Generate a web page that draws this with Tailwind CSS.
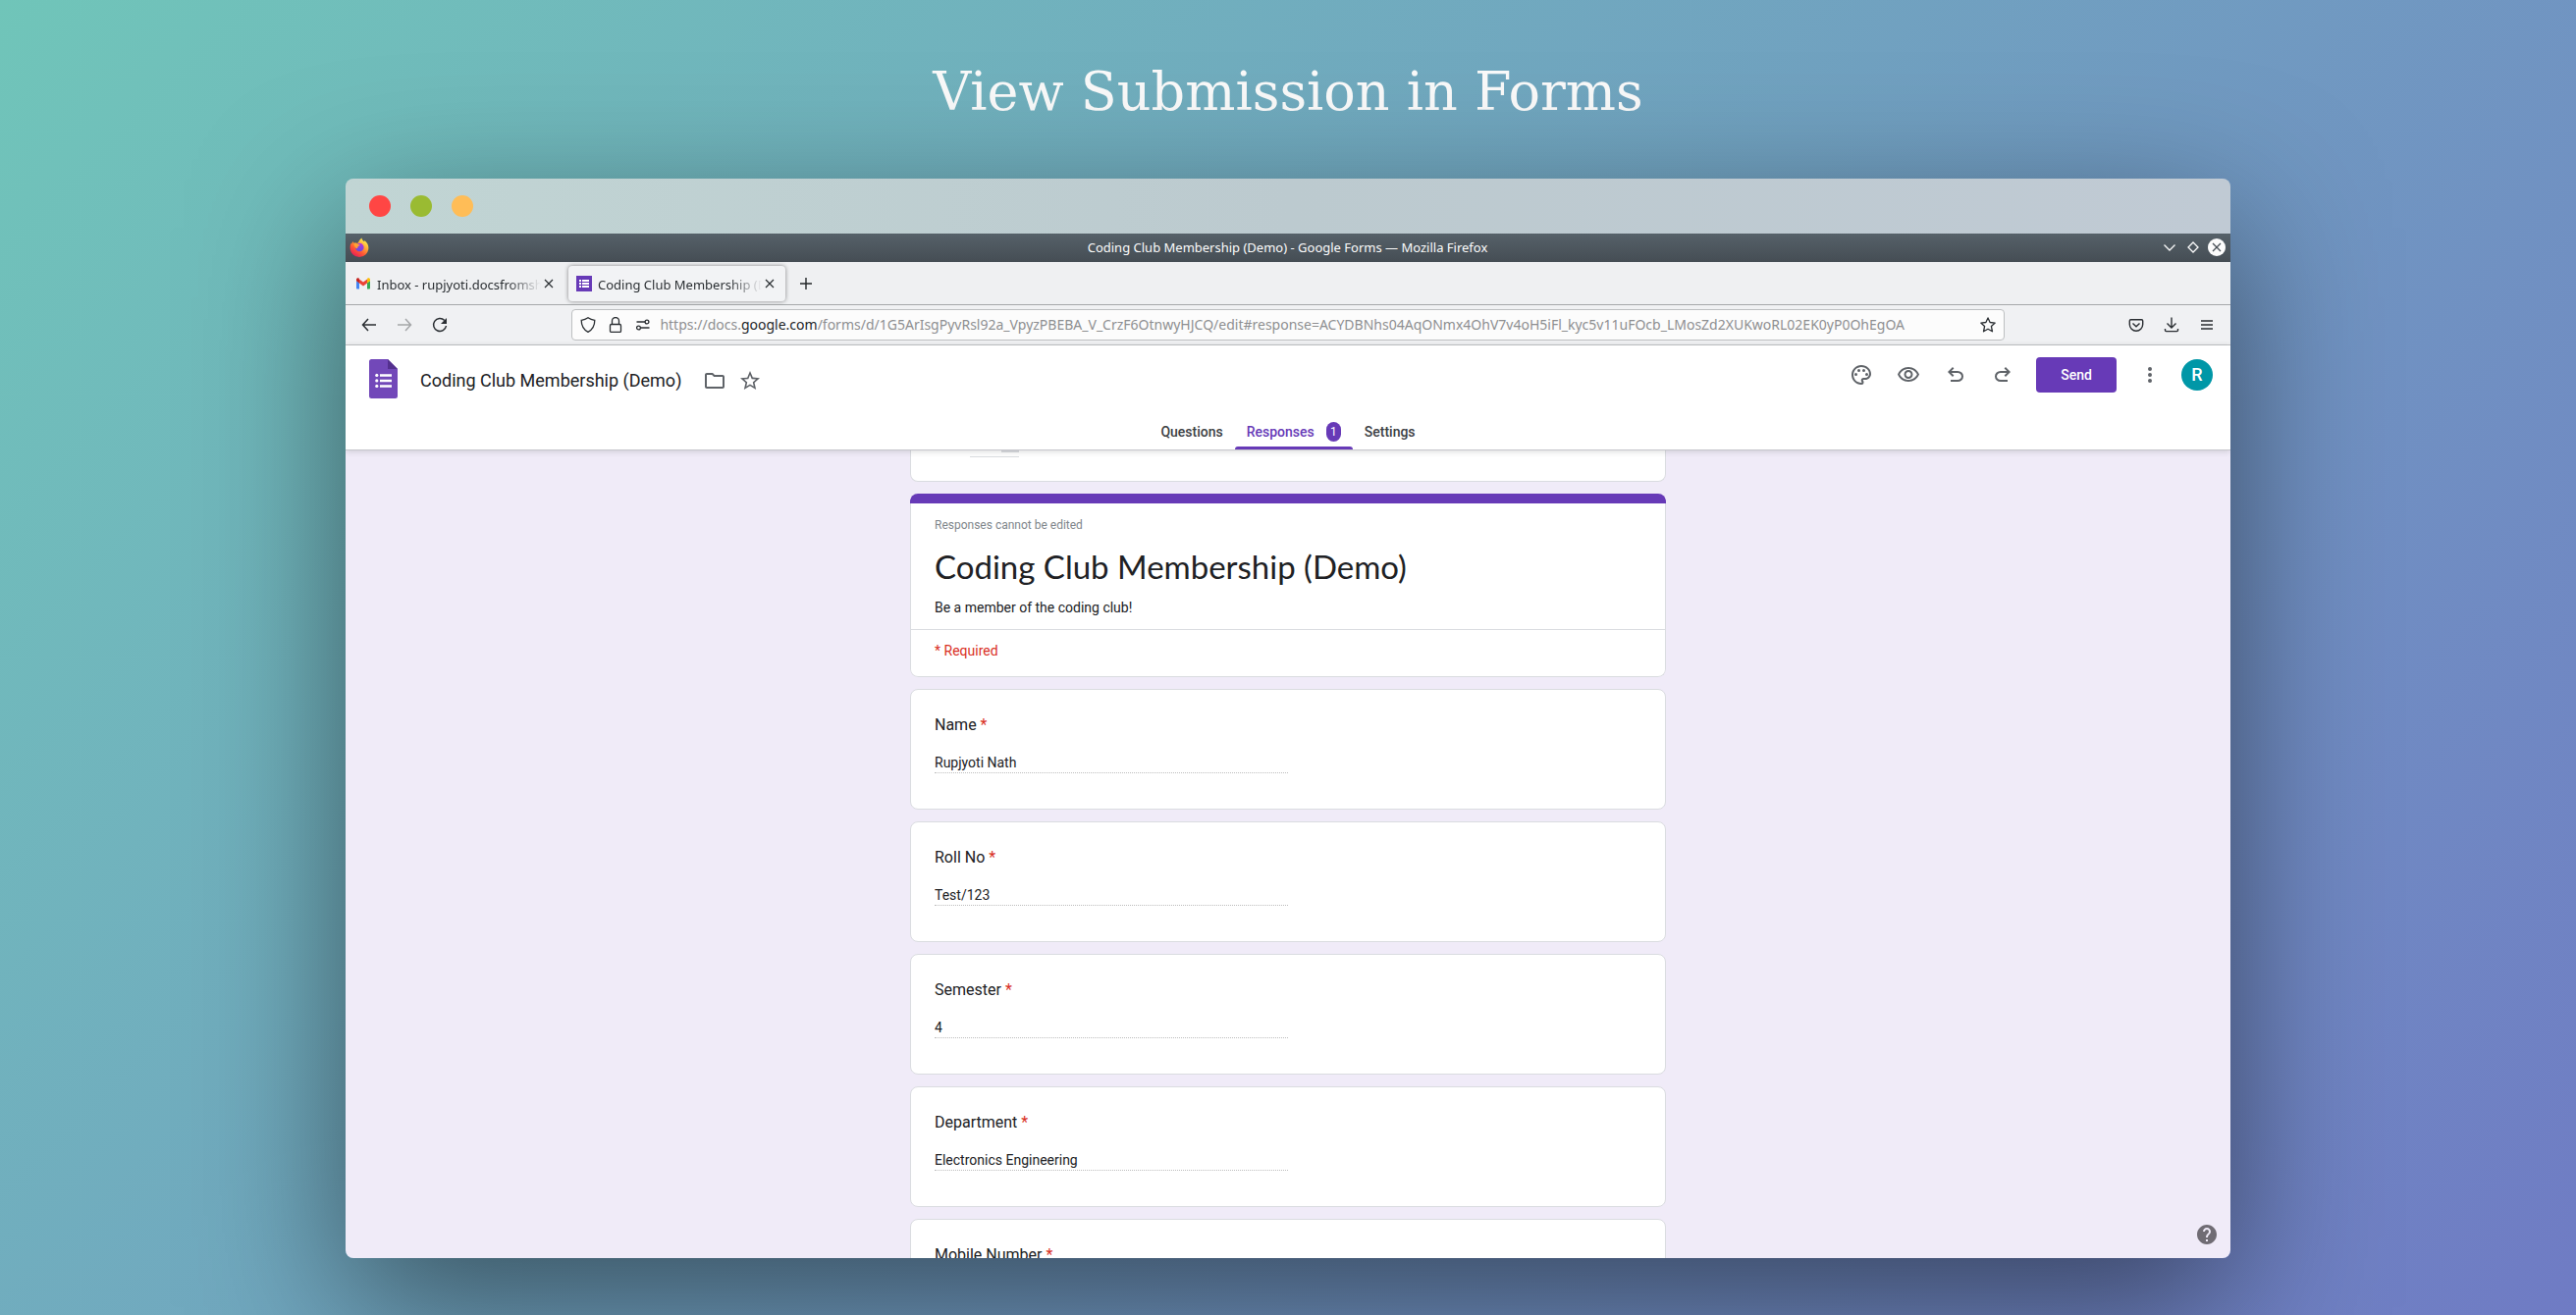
<!DOCTYPE html>
<html lang="en">
<head>
  <meta charset="utf-8">
  <meta name="viewport" content="width=device-width, initial-scale=1">
  <title>View Submission in Forms</title>
  <script src="https://cdn.jsdelivr.net/npm/@tailwindcss/browser@4"></script>
</head>
<body class="flex h-screen flex-col overflow-hidden bg-linear-135 from-[#70c5b9] to-[#6f7bc4] px-88 pb-[58px] font-['Noto_Sans',sans-serif]">

  <h1 class="pt-[58px] pb-[52px] text-center font-['DejaVu_Serif',serif] text-[54px] leading-[72px] text-[#fafafa]">View Submission in Forms</h1>

  <!-- Window frame -->
  <div class="relative flex min-h-0 flex-1 flex-col overflow-hidden rounded-lg shadow-[0_50px_150px_rgba(0,0,0,0.5)]">

    <div class="flex h-14 shrink-0 items-center gap-5 bg-linear-to-r from-[#c1d5d4] via-[#bccacf] to-[#c0cad4] pl-6">
      <span class="size-[22px] rounded-full bg-[#ff4644]"></span>
      <span class="size-[22px] rounded-full bg-[#9abb32]"></span>
      <span class="size-[22px] rounded-full bg-[#ffbd57]"></span>
    </div>

    <!-- Firefox title bar -->
    <div class="flex h-[29px] shrink-0 items-center bg-linear-to-b from-[#566169] to-[#454d54] pr-[5px] pb-px pl-1 text-[#fcfcfc]">
      <div class="flex flex-1 items-center">
        <svg class="size-5" viewBox="0 0 20 20">
          <defs>
            <linearGradient id="fx" x1="0.85" y1="0.1" x2="0.25" y2="1">
              <stop offset="0" stop-color="#fff44f"/>
              <stop offset="0.35" stop-color="#ffa436"/>
              <stop offset="0.65" stop-color="#ff5634"/>
              <stop offset="1" stop-color="#e6195c"/>
            </linearGradient>
            <linearGradient id="fx-globe" x1="0.7" y1="0" x2="0.3" y2="1">
              <stop offset="0" stop-color="#b833e1"/>
              <stop offset="1" stop-color="#5b4fe0"/>
            </linearGradient>
          </defs>
          <path fill="url(#fx)" d="M12.4.5c.4 1.900 1.500 2.700 2.700 3.700.2-.3.200-.7.100-1.100 2.500 1.700 4.200 4.300 4.200 7.400a9.400 9.400 0 0 1-18.800 0c0-2.300.500-3.800 1.300-5 0 .5.100.8.300 1.100.1-1 .7-1.900 1.300-2.600.2.900.6 1.400 1.200 1.800 1.200-.3 2.300-.1 3.200.4C9.600 4.200 10.500 1.800 12.400.5z"/>
          <circle cx="10.300" cy="10" r="4.300" fill="url(#fx-globe)"/>
          <path fill="#ffa233" d="M4.700 5.800c1.500-.7 3.200-.2 4.200 1.100.5.200 1.700.2 1.900.7-.3 1.100-1.700 1.100-2.200 1.700-.5.700.1 1.500-.8 2-1.600-.3-3.500-2.700-3.100-5.500z"/>
        </svg>
      </div>
      <div class="text-[13px] leading-5">Coding Club Membership (Demo) - Google Forms — Mozilla Firefox</div>
      <div class="flex flex-1 items-center justify-end gap-1.5">
        <button aria-label="Minimize">
          <svg class="size-[18px]" viewBox="0 0 18 18" fill="none" stroke="currentColor" stroke-width="1.300"><path d="m3.500 6.500 5.500 5.500 5.500-5.500"/></svg>
        </button>
        <button aria-label="Maximize">
          <svg class="size-[18px]" viewBox="0 0 18 18" fill="none" stroke="currentColor" stroke-width="1.300"><path d="m9 4 5 5-5 5-5-5z"/></svg>
        </button>
        <button aria-label="Close window">
          <svg class="size-[18px]" viewBox="0 0 18 18"><circle cx="9" cy="9" r="9" fill="#fcfcfc"/><path d="m5 5 8 8m0-8-8 8" stroke="#474f56" stroke-width="1.300"/></svg>
        </button>
      </div>
    </div>

    <!-- Tabs -->
    <div class="flex h-11 shrink-0 items-center gap-1 border-b border-[#a5a8aa] bg-[#eff0f2] px-0.5 text-[13px] text-[#2a2e32]">
      <div class="flex h-9 w-[221px] items-center gap-1.5 pr-2 pl-2">
        <svg class="size-4 shrink-0" viewBox="0 0 16 16">
          <path fill="#4285f4" d="M1 5v7.500c0 .6.4 1 1 1h2V7.300z"/>
          <path fill="#34a853" d="M15 5v7.500c0 .6-.4 1-1 1h-2V7.300z"/>
          <path fill="#fbbc04" d="M12 3.500v4l3-2.300V4c0-1.500-1.500-2.200-2.600-1.400z"/>
          <path fill="#ea4335" d="M4 7.500v-4l4 3 4-3v4l-4 3z"/>
          <path fill="#c5221f" d="M1 4v1.200l3 2.300v-4l-.4-.9C2.500 1.800 1 2.500 1 4z"/>
        </svg>
        <span class="-mr-1.5 flex-1 overflow-hidden pt-0.5 leading-5 whitespace-nowrap mask-r-from-80% mask-r-to-100%">Inbox - rupjyoti.docsfromsh</span>
        <button aria-label="Close tab">
          <svg class="size-4" viewBox="0 0 16 16" stroke="currentColor" stroke-width="1.200"><path d="m4 4 8 8m0-8-8 8"/></svg>
        </button>
      </div>
      <div class="flex h-9 w-[221px] items-center gap-1.5 rounded bg-[#f2f3f5] pr-2 pl-2 shadow-[0_0_4px_rgba(0,0,0,0.45)]">
        <svg class="size-4 shrink-0" viewBox="0 0 16 16">
          <rect width="16" height="16" fill="#673ab7"/>
          <path fill="#fff" d="M3 4h2v2H3zm3 0h7v2H6zM3 7h2v2H3zm3 0h7v2H6zm-3 3h2v2H3zm3 0h7v2H6z"/>
        </svg>
        <span class="-mr-1.5 flex-1 overflow-hidden pt-0.5 leading-5 whitespace-nowrap mask-r-from-80% mask-r-to-100%">Coding Club Membership (Demo)</span>
        <button aria-label="Close tab">
          <svg class="size-4" viewBox="0 0 16 16" stroke="currentColor" stroke-width="1.200"><path d="m4 4 8 8m0-8-8 8"/></svg>
        </button>
      </div>
      <button aria-label="New tab" class="ml-2">
        <svg class="size-[18px]" viewBox="0 0 18 18" stroke="#232629" stroke-width="1.400"><path d="M9 3v12M3 9h12"/></svg>
      </button>
    </div>

    <!-- Navigation bar -->
    <div class="flex h-[41px] shrink-0 items-center border-b border-[#c3c4c6] bg-[#f0f1f3] text-[#2a2e32]">
      <div class="flex flex-1 items-center gap-5 pl-4">
        <button aria-label="Back">
          <svg class="size-4" viewBox="0 0 16 16" fill="none" stroke="currentColor" stroke-width="1.500"><path d="M15 8H1.500M7 2 1.500 8 7 14"/></svg>
        </button>
        <button aria-label="Forward" class="text-[#a4a6a8]" disabled>
          <svg class="size-4" viewBox="0 0 16 16" fill="none" stroke="currentColor" stroke-width="1.500"><path d="M1 8h13.500M9 2l5.500 6L9 14"/></svg>
        </button>
        <button aria-label="Reload">
          <svg class="size-4" viewBox="0 0 16 16"><path fill="none" stroke="currentColor" stroke-width="1.500" d="M14.500 9A6.500 6.500 0 1 1 12.800 3.500"/><path fill="currentColor" d="M15 1v6H9z"/></svg>
        </button>
      </div>

      <div class="flex h-8 w-[76%] items-center gap-3 rounded border border-[#bdbfc1] bg-[#fcfcfc] px-2">
        <svg class="size-4 shrink-0" viewBox="0 0 16 16" fill="none" stroke="currentColor" stroke-width="1.300"><path d="M8 .7C5.800 2.300 3.500 3 1.200 3.300c0 5.500 1.300 9.200 6.800 12 5.500-2.800 6.800-6.500 6.800-12C12.500 3 10.200 2.300 8 .7z"/></svg>
        <svg class="size-4 shrink-0" viewBox="0 0 16 16" fill="none" stroke="currentColor" stroke-width="1.300"><rect x="2.500" y="7.500" width="11" height="8" rx="1.200"/><path d="M4.500 7.500V4a3.500 3.500 0 0 1 7 0v3.500"/></svg>
        <svg class="size-4 shrink-0" viewBox="0 0 16 16" fill="none" stroke="currentColor" stroke-width="1.300"><path d="M1.500 5H10M6 11h8.500"/><circle cx="12" cy="5" r="1.900"/><circle cx="3.500" cy="11" r="1.900"/></svg>
        <div role="textbox" aria-label="Address" contenteditable="true" class="-ml-1 flex-1 overflow-hidden pl-px text-[14px] leading-6 whitespace-nowrap text-[#8e8f91]">https://docs.<span class="text-[#232629]">google.com</span>/forms/d/1G5ArIsgPyvRsl92a_VpyzPBEBA_V_CrzF6OtnwyHJCQ/edit#response=ACYDBNhs04AqONmx4OhV7v4oH5iFl_kyc5v11uFOcb_LMosZd2XUKwoRL02EK0yP0OhEgOA</div>
        <button aria-label="Bookmark">
          <svg class="size-4" viewBox="0 0 16 16" fill="none" stroke="currentColor" stroke-width="1.300" stroke-linejoin="round"><path d="m8 .9 2.100 4.600 5.100.6-3.800 3.400 1.100 5.300L8 12.200l-4.500 2.600 1.100-5.300L.8 6.100l5.100-.6z"/></svg>
        </button>
      </div>

      <div class="flex flex-1 items-center justify-end gap-5 pr-4">
        <button aria-label="Save to Pocket">
          <svg class="size-4" viewBox="0 0 16 16" fill="none" stroke="currentColor" stroke-width="1.400"><path d="M2.500 2.700h11c.7 0 1.200.5 1.200 1.200v3.600a6.700 6.700 0 0 1-13.400 0V3.900c0-.7.5-1.200 1.200-1.200z"/><path d="M4.500 6.500 8 9.800l3.500-3.300"/></svg>
        </button>
        <button aria-label="Downloads">
          <svg class="size-4" viewBox="0 0 16 16" fill="none" stroke="currentColor" stroke-width="1.400"><path d="M8 .5v10.500M3.500 6.500 8 11l4.500-4.500M1.500 12v1.500c0 .6.500 1.100 1.100 1.100h10.800c.6 0 1.100-.5 1.100-1.100V12"/></svg>
        </button>
        <button aria-label="Menu">
          <svg class="size-4" viewBox="0 0 16 16" stroke="currentColor" stroke-width="1.400"><path d="M2 4h12M2 8h12M2 12h12"/></svg>
        </button>
      </div>
    </div>

    <!-- Forms header -->
    <header class="relative z-10 flex h-[107px] shrink-0 flex-col justify-between border-b border-[#c6c6cb] bg-white font-[Roboto,sans-serif] text-[#5f6368] shadow-[0_1px_6px_rgba(60,64,67,0.2)]">
      <div class="flex pr-[18px] pl-6">
        <div class="flex flex-1 items-center pt-2">
          <svg class="h-10 w-[29px]" viewBox="0 0 29 40">
            <path fill="#7248b9" d="M2.500 0H19l10 10v27.500a2.500 2.500 0 0 1-2.500 2.500h-24A2.500 2.500 0 0 1 0 37.500v-35A2.500 2.500 0 0 1 2.500 0z"/>
            <path fill="#54308f" d="M19 0l10 10H19z"/>
            <path fill="#fff" d="M11 15.200h12v2.500H11zm0 5.500h12v2.500H11zm0 5.500h12v2.500H11z"/>
            <g fill="#fff"><circle cx="7.800" cy="16.400" r="1.600"/><circle cx="7.800" cy="21.900" r="1.600"/><circle cx="7.800" cy="27.400" r="1.600"/></g>
          </svg>
          <input type="text" aria-label="Form title" value="Coding Club Membership (Demo)" class="ml-[23px] h-8 w-72 pt-0.5 text-[18px] text-[#202124]">
          <button aria-label="Move to folder" class="pt-1">
            <svg class="size-6" viewBox="0 0 24 24" fill="currentColor"><path d="M9.200 6l2 2H20v10H4V6h5.200M10 4H4c-1.100 0-2 .9-2 2v12c0 1.100.9 2 2 2h16c1.100 0 2-.9 2-2V8c0-1.100-.9-2-2-2h-8z"/></svg>
          </button>
          <button aria-label="Star" class="ml-3 pt-1">
            <svg class="size-6" viewBox="0 0 24 24" fill="currentColor"><path d="M22 9.240l-7.190-.62L12 2 9.190 8.630 2 9.240l5.460 4.730L5.820 21 12 17.270 18.180 21l-1.630-7.030L22 9.240zM12 15.400l-3.760 2.270 1-4.280-3.320-2.880 4.380-.38L12 6.100l1.710 4.040 4.380.38-3.320 2.880 1 4.280L12 15.400z"/></svg>
          </button>
        </div>

        <div class="flex h-15 items-center">
          <div class="flex gap-6 pr-[22px]">
            <button aria-label="Customize theme">
              <svg class="size-6" viewBox="0 0 24 24" fill="currentColor"><path d="M12 22C6.490 22 2 17.510 2 12S6.490 2 12 2s10 4.040 10 9c0 3.310-2.690 6-6 6h-1.770c-.28 0-.5.22-.5.5 0 .12.050.23.130.33.41.47.64 1.060.64 1.670A2.500 2.500 0 0 1 12 22zm0-18c-4.410 0-8 3.590-8 8s3.590 8 8 8c.28 0 .5-.22.5-.5a.54.54 0 0 0-.14-.35c-.41-.46-.63-1.050-.63-1.650a2.500 2.500 0 0 1 2.500-2.500H16c2.210 0 4-1.790 4-4 0-3.860-3.590-7-8-7z"/><circle cx="6.500" cy="11.500" r="1.500"/><circle cx="9.500" cy="7.500" r="1.500"/><circle cx="14.500" cy="7.500" r="1.500"/><circle cx="17.500" cy="11.500" r="1.500"/></svg>
            </button>
            <button aria-label="Preview">
              <svg class="size-6" viewBox="0 0 24 24" fill="currentColor"><path d="M12 6c3.790 0 7.170 2.130 8.820 5.500C19.170 14.870 15.790 17 12 17s-7.170-2.130-8.820-5.500C4.830 8.130 8.210 6 12 6m0-2C7 4 2.730 7.110 1 11.500 2.730 15.890 7 19 12 19s9.270-3.110 11-7.500C21.270 7.110 17 4 12 4zm0 5c1.380 0 2.500 1.120 2.500 2.500S13.380 14 12 14s-2.500-1.120-2.500-2.500S10.620 9 12 9m0-2c-2.480 0-4.500 2.020-4.500 4.500S9.520 16 12 16s4.500-2.020 4.500-4.500S14.480 7 12 7z"/></svg>
            </button>
            <button aria-label="Undo">
              <svg class="size-6" viewBox="0 0 24 24" fill="currentColor"><path d="M7 19v-2h7.100q1.575 0 2.738-1T18 13.500t-1.162-2.500T14.100 10H7.800l2.600 2.600L9 14 4 9l5-5 1.400 1.400L7.800 8h6.300q2.425 0 4.163 1.575T20 13.500t-1.737 3.925T14.100 19z"/></svg>
            </button>
            <button aria-label="Redo">
              <svg class="size-6 -scale-x-100" viewBox="0 0 24 24" fill="currentColor"><path d="M7 19v-2h7.100q1.575 0 2.738-1T18 13.500t-1.162-2.500T14.100 10H7.800l2.600 2.600L9 14 4 9l5-5 1.400 1.400L7.800 8h6.300q2.425 0 4.163 1.575T20 13.500t-1.737 3.925T14.100 19z"/></svg>
            </button>
          </div>
          <button class="h-9 w-[82px] rounded bg-[#673ab7] text-[14px] font-medium text-white">Send</button>
          <button aria-label="More" class="mr-5 ml-[22px]">
            <svg class="size-6" viewBox="0 0 24 24" fill="currentColor"><circle cx="12" cy="6" r="2"/><circle cx="12" cy="12" r="2"/><circle cx="12" cy="18" r="2"/></svg>
          </button>
          <button aria-label="Account" class="size-8 rounded-full bg-[#0097a7] text-[18px] leading-8 font-medium text-white">R</button>
        </div>
      </div>

      <nav class="flex h-8 justify-center text-[14px] font-medium text-[#3c4043]">
        <a href="#" class="px-3 pt-1">Questions</a>
        <a href="#" class="relative flex items-start px-3 pt-1 text-[#673ab7]">
          Responses
          <span class="ml-3 w-[15px] rounded-full bg-[#673ab7] text-center text-[12px] leading-5 font-normal text-white">1</span>
          <span class="absolute inset-x-0 bottom-0 h-[3px] rounded-t bg-[#673ab7]"></span>
        </a>
        <a href="#" class="px-3 pt-1">Settings</a>
      </nav>
    </header>

    <!-- Response -->
    <main class="flex min-h-0 flex-1 flex-col items-center gap-3 overflow-hidden bg-[#f0ebf8] font-[Roboto,sans-serif] text-[14px] leading-5 text-[#202124]">

      <div class="h-8 w-[770px] shrink-0 rounded-b-lg border border-t-0 border-[#dadce0] bg-white pl-15">
        <div class="flex h-[7px] w-[50px] justify-end border-b border-[#dadce0]">
          <span class="h-0.5 w-[18px] bg-[#dadce0]"></span>
        </div>
      </div>

      <section class="w-[770px] shrink-0 overflow-hidden rounded-lg">
        <div class="h-2.5 bg-[#673ab7]"></div>
        <div class="rounded-b-lg border border-t-0 border-[#dadce0] bg-white">
          <div class="border-b border-[#dadce0] px-6 py-3">
            <p class="text-[12px] leading-5 text-[#80868b]">Responses cannot be edited</p>
            <h2 class="my-3 font-[Lato,sans-serif] text-[33px] leading-10">Coding Club Membership (Demo)</h2>
            <p>Be a member of the coding club!</p>
          </div>
          <p class="px-6 pt-[11px] pb-4 text-[#d93025]">* Required</p>
        </div>
      </section>

      <div class="w-[770px] shrink-0 rounded-lg border border-[#dadce0] bg-white px-6 pt-6 pb-9">
        <label for="name" class="mb-4 block text-[16px] leading-6">Name <span class="text-[#d93025]">*</span></label>
        <input id="name" type="text" value="Rupjyoti Nath" readonly class="block h-[21px] w-1/2 border-b border-dotted border-[#bdbdbd]">
      </div>

      <div class="w-[770px] shrink-0 rounded-lg border border-[#dadce0] bg-white px-6 pt-6 pb-9">
        <label for="roll" class="mb-4 block text-[16px] leading-6">Roll No <span class="text-[#d93025]">*</span></label>
        <input id="roll" type="text" value="Test/123" readonly class="block h-[21px] w-1/2 border-b border-dotted border-[#bdbdbd]">
      </div>

      <div class="w-[770px] shrink-0 rounded-lg border border-[#dadce0] bg-white px-6 pt-6 pb-9">
        <label for="semester" class="mb-4 block text-[16px] leading-6">Semester <span class="text-[#d93025]">*</span></label>
        <input id="semester" type="text" value="4" readonly class="block h-[21px] w-1/2 border-b border-dotted border-[#bdbdbd]">
      </div>

      <div class="w-[770px] shrink-0 rounded-lg border border-[#dadce0] bg-white px-6 pt-6 pb-9">
        <label for="department" class="mb-4 block text-[16px] leading-6">Department <span class="text-[#d93025]">*</span></label>
        <input id="department" type="text" value="Electronics Engineering" readonly class="block h-[21px] w-1/2 border-b border-dotted border-[#bdbdbd]">
      </div>

      <div class="w-[770px] shrink-0 rounded-lg border border-[#dadce0] bg-white px-6 pt-6 pb-9">
        <label for="mobile" class="mb-4 block text-[16px] leading-6">Mobile Number <span class="text-[#d93025]">*</span></label>
        <input id="mobile" type="text" readonly class="block h-[21px] w-1/2 border-b border-dotted border-[#bdbdbd]">
      </div>
    </main>

    <button aria-label="Help" class="absolute right-3 bottom-3">
      <svg class="size-6" viewBox="0 0 24 24"><path fill="#706c74" d="M12 2C6.480 2 2 6.480 2 12s4.480 10 10 10 10-4.480 10-10S17.520 2 12 2zm1 17h-2v-2h2v2zm2.070-7.750l-.9.920C13.450 12.900 13 13.500 13 15h-2v-.5c0-1.100.45-2.100 1.170-2.830l1.240-1.260c.37-.36.59-.86.59-1.410 0-1.100-.9-2-2-2s-2 .9-2 2H8c0-2.210 1.790-4 4-4s4 1.790 4 4c0 .88-.36 1.680-.93 2.250z"/></svg>
    </button>
  </div>
</body>
</html>
